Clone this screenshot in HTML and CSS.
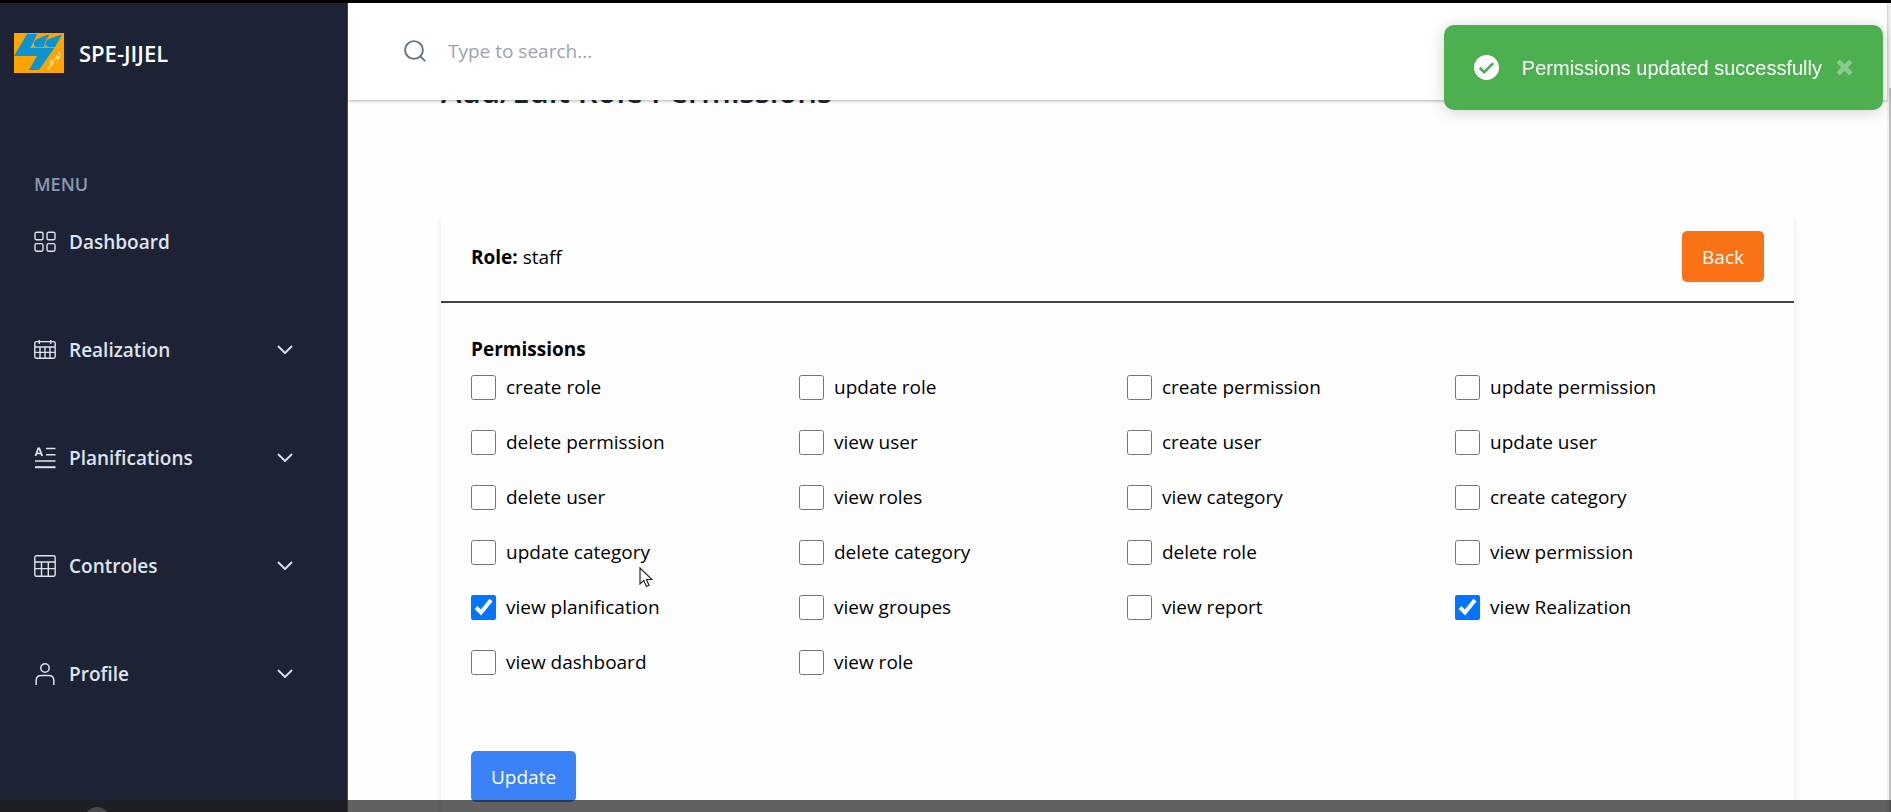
FILE: index.html
```html
<!DOCTYPE html>
<html lang="en">
<head>
<meta charset="utf-8">
<meta name="viewport" content="width=device-width, initial-scale=1">
<title>SPE-JIJEL - Role Permissions</title>
<link rel="stylesheet" href="styles.css">
</head>
<body>
<div class="app">
  <aside class="sidebar">
    <a class="brand" href="#">
      <svg class="brand-logo" viewBox="0 0 50 40" aria-hidden="true">
        <rect width="50" height="40" fill="#fca503"/>
        <path fill="#0d93d0" d="M13 1h10L17 14h24L25 37H15l8-14H0z"/>
        <path fill="#0d93d0" d="M35 1.500 31 14H22c-4-3-2-6 1-8 4-2 8-3 12-4.500zM48 1.500 41 14h-7c-4-3-2-6 1-8 4-2 9-3 13-4.500z"/>
        <path fill="none" stroke="#fca503" stroke-width=".8" d="M16 14.500h25M33.500 4 30 14"/>
        <path fill="none" stroke="#fbe2a6" stroke-width="1.300" d="M33 35l2 1 1-3 3-1M36 29c2-3 4-1 3 1s-3 2-2-1M41 27l2-4 1 3 2-4-1-2M44 19l2 1"/>
      </svg>
      <span>SPE-JIJEL</span>
    </a>
    <nav class="menu">
      <h2 class="menu-title">MENU</h2>
      <a class="menu-item" href="#">
        <svg class="menu-icon" viewBox="0 0 22 22" aria-hidden="true"><g fill="none" stroke="currentColor" stroke-width="1.4"><rect x="1" y="1.2" width="8" height="7.6" rx="1.6"/><rect x="13" y="1.2" width="8" height="7.6" rx="1.6"/><rect x="1" y="12.6" width="8" height="7.6" rx="1.6"/><rect x="13" y="12.6" width="8" height="7.6" rx="1.6"/></g></svg>
        <span>Dashboard</span>
      </a>
      <a class="menu-item" href="#">
        <svg class="menu-icon" viewBox="0 0 22 22" aria-hidden="true"><g fill="none" stroke="currentColor" stroke-width="1.4"><rect x=".8" y="2.6" width="20.4" height="16.6" rx="1.6"/><path d="M1 8h20M1 13.4h20M6 8v11M11 8v11M16 8v11M5.3 1v4M16.7 1v4"/></g></svg>
        <span>Realization</span>
        <svg class="menu-arrow" viewBox="0 0 16 10" aria-hidden="true"><path d="M1.5 1.5 8 8l6.500-6.500" fill="none" stroke="currentColor" stroke-width="1.8" stroke-linecap="round" stroke-linejoin="round"/></svg>
      </a>
      <a class="menu-item" href="#">
        <svg class="menu-icon" viewBox="0 0 22 22" aria-hidden="true"><g fill="none" stroke="currentColor" stroke-width="1.4"><path d="M12 1.500h9.500M12 7.700h9.500M1 14h20.500"/><path d="M1 20.200h20.500" stroke-width="2"/><path d="M1.500 9 4.300 1.300h1L8.200 9M2.700 6.300h4.300" stroke-width="1.800"/></g></svg>
        <span>Planifications</span>
        <svg class="menu-arrow" viewBox="0 0 16 10" aria-hidden="true"><path d="M1.5 1.5 8 8l6.500-6.500" fill="none" stroke="currentColor" stroke-width="1.8" stroke-linecap="round" stroke-linejoin="round"/></svg>
      </a>
      <a class="menu-item" href="#">
        <svg class="menu-icon" viewBox="0 0 22 22" aria-hidden="true"><g fill="none" stroke="currentColor" stroke-width="1.4"><rect x=".8" y=".8" width="20.400" height="20.400" rx="1.600"/><path d="M1 7h20M1 13.600h20M7.500 7v14M14.300 7v14"/></g></svg>
        <span>Controles</span>
        <svg class="menu-arrow" viewBox="0 0 16 10" aria-hidden="true"><path d="M1.5 1.5 8 8l6.500-6.500" fill="none" stroke="currentColor" stroke-width="1.8" stroke-linecap="round" stroke-linejoin="round"/></svg>
      </a>
      <a class="menu-item" href="#">
        <svg class="menu-icon" viewBox="0 0 22 22" aria-hidden="true"><g fill="none" stroke="currentColor" stroke-width="1.500"><circle cx="11" cy="5" r="4.200"/><path d="M2.200 22v-4.500c0-3 2-5 5-5h7.600c3 0 5 2 5 5V22"/></g></svg>
        <span>Profile</span>
        <svg class="menu-arrow" viewBox="0 0 16 10" aria-hidden="true"><path d="M1.5 1.5 8 8l6.500-6.500" fill="none" stroke="currentColor" stroke-width="1.8" stroke-linecap="round" stroke-linejoin="round"/></svg>
      </a>
    </nav>
  </aside>

  <div class="page">
    <header class="topbar">
      <svg class="search-icon" viewBox="0 0 22 22" aria-hidden="true"><g fill="none" stroke="currentColor" stroke-width="1.900"><circle cx="10" cy="10" r="8.900"/><path d="m16.300 16.300 4.900 4.900"/></g></svg>
      <input class="search-input" type="text" placeholder="Type to search..." aria-label="Search">
    </header>
    <main class="content">
      <h1 class="page-title">Add/Edit Role Permissions</h1>
      <form class="card">
        <div class="card-head">
          <p class="role"><strong>Role:</strong> staff</p>
          <button class="btn btn-back" type="button">Back</button>
        </div>
        <div class="card-body">
          <h2 class="group-title">Permissions</h2>
          <div class="permissions">
            <label class="permission"><input type="checkbox">create role</label>
            <label class="permission"><input type="checkbox">update role</label>
            <label class="permission"><input type="checkbox">create permission</label>
            <label class="permission"><input type="checkbox">update permission</label>
            <label class="permission"><input type="checkbox">delete permission</label>
            <label class="permission"><input type="checkbox">view user</label>
            <label class="permission"><input type="checkbox">create user</label>
            <label class="permission"><input type="checkbox">update user</label>
            <label class="permission"><input type="checkbox">delete user</label>
            <label class="permission"><input type="checkbox">view roles</label>
            <label class="permission"><input type="checkbox">view category</label>
            <label class="permission"><input type="checkbox">create category</label>
            <label class="permission"><input type="checkbox">update category</label>
            <label class="permission"><input type="checkbox">delete category</label>
            <label class="permission"><input type="checkbox">delete role</label>
            <label class="permission"><input type="checkbox">view permission</label>
            <label class="permission"><input type="checkbox" checked>view planification</label>
            <label class="permission"><input type="checkbox">view groupes</label>
            <label class="permission"><input type="checkbox">view report</label>
            <label class="permission"><input type="checkbox" checked>view Realization</label>
            <label class="permission"><input type="checkbox">view dashboard</label>
            <label class="permission"><input type="checkbox">view role</label>
          </div>
          <button class="btn btn-update" type="button">Update</button>
        </div>
      </form>
    </main>
  </div>
  <div class="scrollbar" aria-hidden="true"><div class="scrollbar-thumb"></div></div>
</div>

<div class="toast" role="status">
  <svg class="toast-icon" viewBox="0 0 24 24" aria-hidden="true"><circle cx="12" cy="12" r="12" fill="#fff"/><path d="m5.500 12.300 4.300 4.200 8.700-8.700" fill="none" stroke="#4caf50" stroke-width="2.600"/></svg>
  <span class="toast-text">Permissions updated successfully</span>
  <button class="toast-close" type="button" aria-label="Close"><svg viewBox="0 0 16 16"><path d="m2 2 12 12M14 2 2 14" fill="none" stroke="currentColor" stroke-width="4.400"/></svg></button>
</div>

<svg class="cursor" viewBox="0 0 14 21" aria-hidden="true"><path d="M1 1v16l3.800-3.500 2.600 6 2.600-1.200-2.500-5.800H13z" fill="#fff" stroke="#222" stroke-width="1.200"/></svg>
<div class="overlay-bar" aria-hidden="true"><div class="overlay-knob"></div></div>
</body>
</html>
```
FILE: styles.css
```css
* { box-sizing: border-box; }

body {
  margin: 0;
  height: 100vh;
  overflow: hidden;
  border-top: 3px solid #000;
  background: #fefefe;
  color: #000;
  font-family: "Open Sans", "Noto Sans", sans-serif;
  font-size: 19px;
  line-height: 30px;
}

h1, h2, p { margin: 0; }
button, input { font: inherit; }

.app { display: flex; height: 100%; overflow: hidden; }

/* Sidebar */
.sidebar {
  flex: none;
  width: 348px;
  border-right: 1px solid #4a5263;
  background: #1d2334;
  color: #dee4ee;
}
.brand {
  display: flex;
  align-items: center;
  gap: 15px;
  padding: 30px 14px;
  color: #fff;
  font-size: 22px;
  font-weight: 600;
  text-decoration: none;
}
.brand-logo { width: 50px; height: 40px; }
.menu { padding: 66px 54px 0 34px; }
.menu-title {
  margin-bottom: 28px;
  color: #8a99af;
  font-size: 18px;
  font-weight: 600;
}
.menu-item {
  display: flex;
  align-items: center;
  gap: 13px;
  margin-bottom: 78px;
  color: #dee4ee;
  font-weight: 600;
  text-decoration: none;
}
.menu-icon { width: 22px; height: 22px; }
.menu-arrow { width: 16px; height: 10px; margin-left: auto; }

/* Header */
.page {
  display: flex;
  flex: 1;
  flex-direction: column;
  min-width: 0;
}
.topbar {
  position: relative;
  z-index: 1;
  display: flex;
  flex: none;
  align-items: center;
  gap: 22px;
  height: 97px;
  padding: 0 56px 2px;
  background: #fff;
  box-shadow: 0 1px 3px rgba(0, 0, 0, 0.3);
}
.search-icon { width: 22px; height: 22px; color: #64748b; }
.search-input {
  flex: 1;
  padding: 0;
  border: 0;
  outline: 0;
  background: transparent;
}
.search-input::placeholder { color: #9ca3af; }

/* Content, scrolled up under the header */
.content {
  margin-top: -29px;
  padding: 0 93px;
}
.page-title {
  margin-bottom: 101px;
  color: #1c2434;
  font-size: 31px;
  font-weight: 600;
  line-height: 40px;
}
.card {
  border-radius: 10px;
  background: #fefefe;
  box-shadow: 0 4px 6px rgba(0, 0, 0, 0.1);
}
.card-head {
  display: flex;
  align-items: center;
  justify-content: space-between;
  padding: 19px 30px;
  border-bottom: 2px solid #444;
}
.card-body { padding: 31px 30px 60px; }
.group-title {
  margin-bottom: 8px;
  font-size: 19px;
  font-weight: 700;
}
.permissions {
  display: grid;
  grid-template-columns: repeat(4, 1fr);
  gap: 25px 19px;
}
.permission {
  display: flex;
  align-items: center;
  gap: 10px;
}
.permission input {
  width: 25px;
  height: 25px;
  margin: 0;
  accent-color: #0075ff;
}
.btn {
  height: 51px;
  padding: 0 20px;
  border: 0;
  border-radius: 5px;
  color: #fff;
}
.btn-back { background: #f97316; }
.btn-update { margin-top: 74px; background: #3b82f6; }

.scrollbar {
  flex: none;
  width: 4px;
  padding: 85px 0 0 2px;
  background: #f1f1f1;
}
.scrollbar-thumb { height: 100%; background: #c1c1c1; }

/* Floating layers */
.toast {
  position: fixed;
  z-index: 3;
  top: 25px;
  right: 8px;
  display: flex;
  align-items: center;
  height: 85px;
  padding: 0 30px;
  border-radius: 10px;
  background: #4caf50;
  box-shadow: 0 2px 16px rgba(0, 0, 0, 0.18);
  color: #fff;
  font-family: "Liberation Sans", Arial, sans-serif;
  font-size: 20px;
}
.toast-icon { width: 25px; height: 25px; margin-right: 23px; }
.toast-close {
  display: flex;
  margin-left: 14px;
  padding: 0;
  border: 0;
  background: none;
  color: #8acb8d;
}
.toast-close svg { width: 17px; height: 17px; }

.cursor {
  position: fixed;
  z-index: 4;
  top: 567px;
  left: 639px;
  width: 14px;
  height: 21px;
}
.overlay-bar {
  position: fixed;
  z-index: 5;
  right: 0;
  bottom: 0;
  left: 0;
  height: 12px;
  padding: 7px 0 0 85px;
  overflow: hidden;
  background: rgba(30, 30, 30, 0.7);
}
.overlay-knob {
  width: 24px;
  height: 24px;
  border-radius: 50%;
  background: #4a4a4a;
}
```
